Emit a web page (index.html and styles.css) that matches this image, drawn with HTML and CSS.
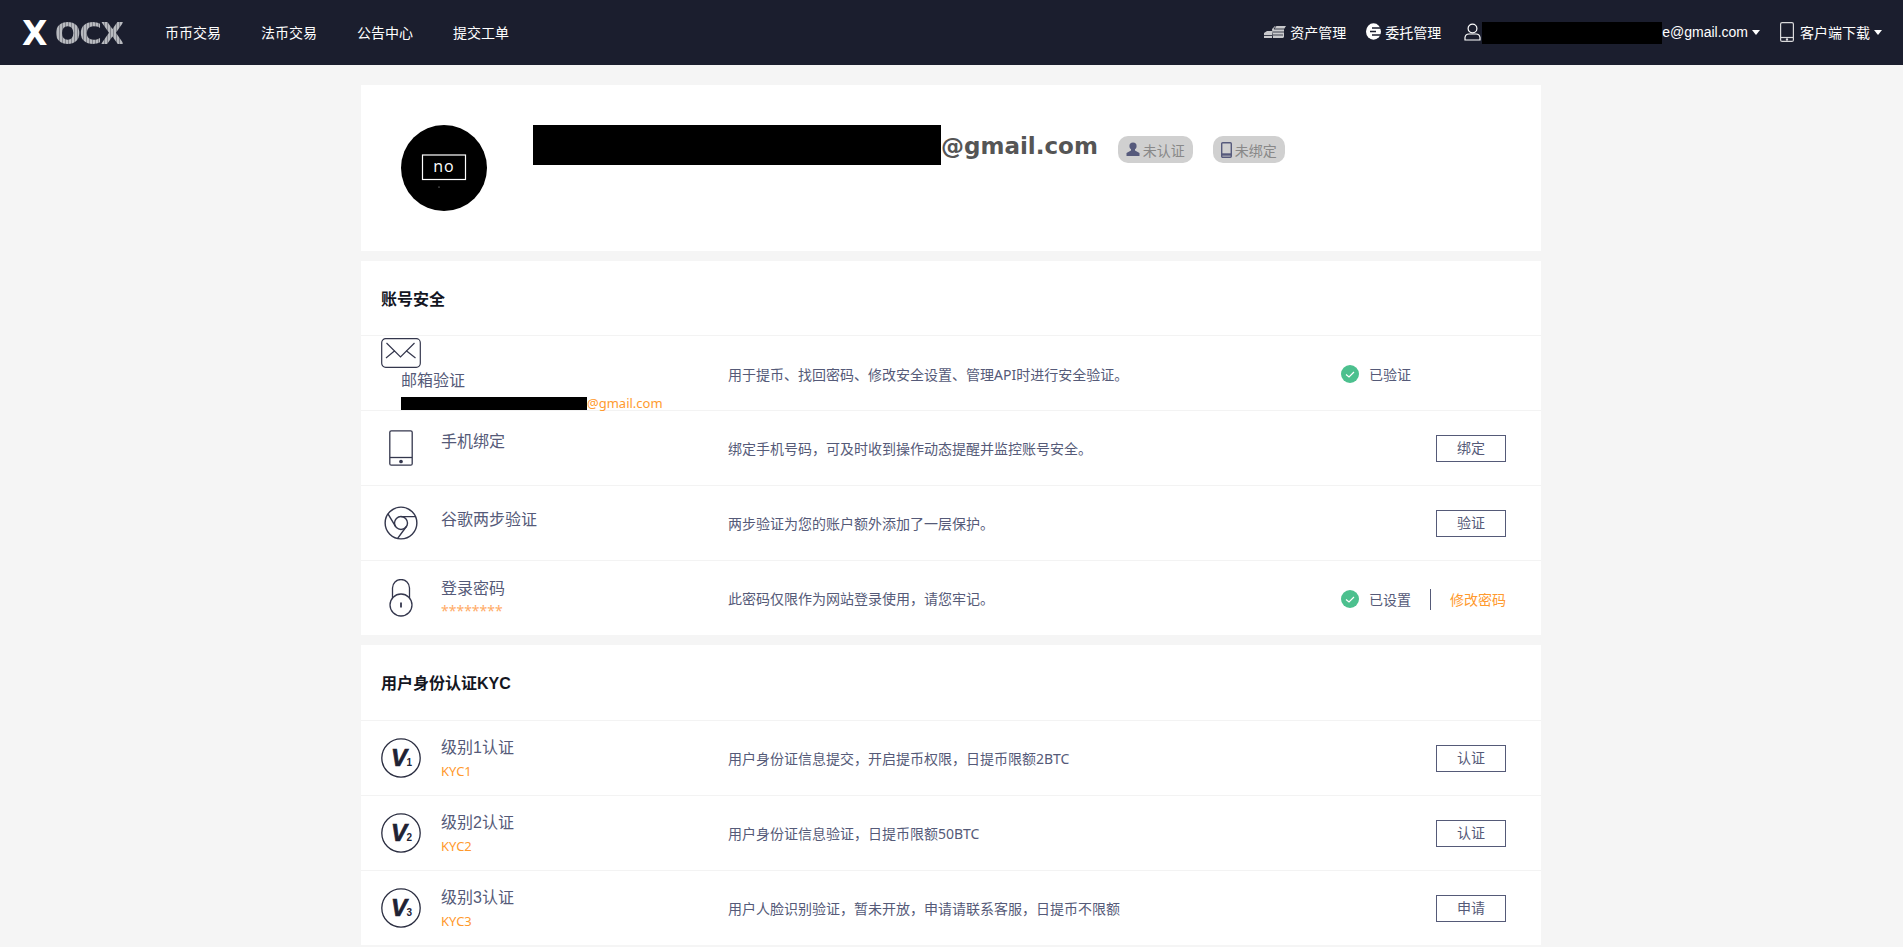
FILE: index.html
```html
<!DOCTYPE html>
<html lang="zh-CN">
<head>
    <meta charset="UTF-8">
    <meta name="viewport" content="width=device-width, initial-scale=1.0">
    <title>OCX 个人中心</title>
    <link rel="stylesheet" href="styles.css">
</head>
<body>
    <header class="topbar">
        <div class="logo"><span class="logo-x">X</span><span class="logo-name">OCX</span></div>
        <nav class="topnav">
            <a>币币交易</a>
            <a>法币交易</a>
            <a>公告中心</a>
            <a>提交工单</a>
        </nav>
        <div class="topbar-right">
            <a class="top-link top-assets">
                <svg width="22" height="14" viewBox="0 0 22 14"><path d="M0 8l3-2h5v7H0zM8 4l3-3h11l-2 3v8l-1 1H9z" fill="#c9c9cc"/><path d="M0 10.500h8M9 7h11M9 10h10M12 1l-2 3h10" fill="none" stroke="#1b1e2e" stroke-width=".8"/></svg>
                资产管理
            </a>
            <a class="top-link top-orders">
                <svg width="15" height="17" viewBox="0 0 15 17"><ellipse cx="7.500" cy="8.500" rx="7.500" ry="8.200" fill="#fff"/><path d="M6 5h9M4 8.500h6M6 12h9" stroke="#1b1e2e" stroke-width="1.400" fill="none"/></svg>
                委托管理
            </a>
            <a class="top-link top-user">
                <svg width="17" height="18" viewBox="0 0 17 18" fill="none" stroke="#fff" stroke-width="1.200"><circle cx="8.500" cy="5.500" r="4.400"/><path d="M1 17v-2.500a4 4 0 0 1 4-3.500h7a4 4 0 0 1 4 3.500V17z"/></svg>
                <span class="top-email"><span class="redact redact-top"></span>e@gmail.com</span><i class="caret"></i>
            </a>
            <a class="top-link top-app">
                <svg width="14" height="20" viewBox="0 0 14 20" fill="none" stroke="#d8d8da" stroke-width="1.200"><rect x="0.600" y="0.600" width="12.800" height="18.800" rx="1.500"/><path d="M1 15.500h12"/><circle cx="7" cy="17.500" r=".6"/></svg>
                <span>客户端下载</span><i class="caret"></i>
            </a>
        </div>
    </header>

    <main class="page">
        <section class="card profile">
            <svg class="avatar" width="86" height="86" viewBox="0 0 86 86">
                <circle cx="43" cy="43" r="43" fill="#000"/>
                <rect x="21.500" y="30" width="43" height="24.500" fill="none" stroke="#fff" stroke-width="1.200"/>
                <text x="43" y="47" text-anchor="middle" class="avatar-text">no</text>
                <circle cx="38" cy="62" r=".6" fill="#bbb"/>
            </svg>
            <div class="profile-name">
                <h1 class="email"><span class="redact redact-email"></span>@gmail.com</h1>
                <span class="badge">
                    <svg width="14" height="15" viewBox="0 0 14 15" fill="#565a7c"><circle cx="7" cy="4" r="3.600"/><path d="M5 7h4v1.500l4.500 2.500V14H.5v-3L5 8.500z"/></svg>未认证
                </span>
                <span class="badge">
                    <svg width="11" height="16" viewBox="0 0 11 16" fill="none" stroke="#565a7c" stroke-width="1.400"><rect x=".7" y=".7" width="9.600" height="14.600" rx="1"/><path d="M1 12.500h9" stroke-width="2.400"/></svg>未绑定
                </span>
            </div>
        </section>

        <section class="card">
            <h2 class="card-title">账号安全</h2>

            <div class="row row-mail">
                <div class="row-left row-left-stacked">
                    <svg class="icon-mail" width="40" height="30" viewBox="0 0 40 30" fill="none" stroke="#34374d" stroke-width="1.200"><rect x=".7" y=".7" width="38.600" height="28.600" rx="4"/><path d="M5.500 5L19.500 19 33.500 5M5 20l9-7.500M25 12.500L34.500 20"/></svg>
                    <div class="row-title">邮箱验证</div>
                    <div class="row-sub"><span class="redact redact-mail"></span>@gmail.com</div>
                </div>
                <div class="row-desc">用于提币、找回密码、修改安全设置、管理API时进行安全验证。</div>
                <div class="row-action">
                    <span class="status"><svg width="18" height="18" viewBox="0 0 18 18"><circle cx="9" cy="9" r="9" fill="#4cc08e"/><path d="M5 9.500l3 2.500 5-5" fill="none" stroke="#fff" stroke-width="1.200"/></svg>已验证</span>
                </div>
            </div>

            <div class="row">
                <div class="row-left">
                    <div class="row-icon">
                        <svg width="24" height="36" viewBox="0 0 24 36" fill="none" stroke="#34374d" stroke-width="1.300"><rect x=".8" y=".8" width="22.400" height="34.400" rx="1.500"/><path d="M1 27.500h22"/><circle cx="12" cy="31.500" r="1.200" fill="#34374d"/></svg>
                    </div>
                    <div class="row-text row-text-single">
                        <div class="row-title">手机绑定</div>
                    </div>
                </div>
                <div class="row-desc">绑定手机号码，可及时收到操作动态提醒并监控账号安全。</div>
                <div class="row-action">
                    <a class="btn">绑定</a>
                </div>
            </div>

            <div class="row">
                <div class="row-left">
                    <div class="row-icon">
                        <svg width="34" height="34" viewBox="0 0 24 24" fill="none" stroke="#34374d" stroke-width="1"><circle cx="12" cy="12" r="11.200"/><circle cx="12" cy="12" r="4.600"/><path d="M22.200 7.500H12M2.800 5.500L8 14.200M9.500 23L15.800 14.500"/></svg>
                    </div>
                    <div class="row-text row-text-low">
                        <div class="row-title">谷歌两步验证</div>
                    </div>
                </div>
                <div class="row-desc">两步验证为您的账户额外添加了一层保护。</div>
                <div class="row-action">
                    <a class="btn">验证</a>
                </div>
            </div>

            <div class="row row-password">
                <div class="row-left">
                    <div class="row-icon">
                        <svg width="24" height="38" viewBox="0 0 24 38" fill="none" stroke="#34374d" stroke-width="1.300"><path d="M3.500 19V9a8.500 8.500 0 0 1 17 0v10"/><circle cx="12" cy="26" r="11"/><path d="M12 23.500v5" stroke-width="1.800"/></svg>
                    </div>
                    <div class="row-text">
                        <div class="row-title">登录密码</div>
                        <div class="row-sub row-stars">********</div>
                    </div>
                </div>
                <div class="row-desc">此密码仅限作为网站登录使用，请您牢记。</div>
                <div class="row-action">
                    <span class="status"><svg width="18" height="18" viewBox="0 0 18 18"><circle cx="9" cy="9" r="9" fill="#4cc08e"/><path d="M5 9.500l3 2.500 5-5" fill="none" stroke="#fff" stroke-width="1.200"/></svg>已设置</span>
                    <span class="divider"></span>
                    <a class="link-orange">修改密码</a>
                </div>
            </div>
        </section>

        <section class="card">
            <h2 class="card-title card-title-kyc">用户身份认证KYC</h2>

            <div class="row">
                <div class="row-left">
                    <div class="row-icon">
                        <svg class="kyc-icon" width="40" height="40" viewBox="0 0 40 40"><circle cx="20" cy="20" r="19.200" fill="none" stroke="#2a2d40" stroke-width="1.300"/><text x="10" y="27.500" class="kyc-v">V</text><text x="25.500" y="28" class="kyc-n">1</text></svg>
                    </div>
                    <div class="row-text row-text-kyc">
                        <div class="row-title">级别1认证</div>
                        <div class="row-sub">KYC1</div>
                    </div>
                </div>
                <div class="row-desc">用户身份证信息提交，开启提币权限，日提币限额2BTC</div>
                <div class="row-action">
                    <a class="btn">认证</a>
                </div>
            </div>

            <div class="row">
                <div class="row-left">
                    <div class="row-icon">
                        <svg class="kyc-icon" width="40" height="40" viewBox="0 0 40 40"><circle cx="20" cy="20" r="19.200" fill="none" stroke="#2a2d40" stroke-width="1.300"/><text x="10" y="27.500" class="kyc-v">V</text><text x="25.500" y="28" class="kyc-n">2</text></svg>
                    </div>
                    <div class="row-text row-text-kyc">
                        <div class="row-title">级别2认证</div>
                        <div class="row-sub">KYC2</div>
                    </div>
                </div>
                <div class="row-desc">用户身份证信息验证，日提币限额50BTC</div>
                <div class="row-action">
                    <a class="btn">认证</a>
                </div>
            </div>

            <div class="row">
                <div class="row-left">
                    <div class="row-icon">
                        <svg class="kyc-icon" width="40" height="40" viewBox="0 0 40 40"><circle cx="20" cy="20" r="19.200" fill="none" stroke="#2a2d40" stroke-width="1.300"/><text x="10" y="27.500" class="kyc-v">V</text><text x="25.500" y="28" class="kyc-n">3</text></svg>
                    </div>
                    <div class="row-text row-text-kyc">
                        <div class="row-title">级别3认证</div>
                        <div class="row-sub">KYC3</div>
                    </div>
                </div>
                <div class="row-desc">用户人脸识别验证，暂未开放，申请请联系客服，日提币不限额</div>
                <div class="row-action">
                    <a class="btn">申请</a>
                </div>
            </div>
        </section>
    </main>
</body>
</html>
```

FILE: styles.css
```css
body {
    margin: 0;
    background-color: #f5f5f5;
    font-family: "Liberation Sans", "Noto Sans CJK SC", sans-serif;
    font-size: 14px;
    color: #555a78;
}

svg {
    display: block;
    flex-shrink: 0;
}

.redact {
    display: inline-block;
    background-color: #000;
}

.redact-top {
    width: 180px;
    height: 22px;
    vertical-align: middle;
}

.redact-email {
    width: 408px;
    height: 40px;
}

.redact-mail {
    width: 186px;
    height: 13px;
    vertical-align: -2px;
}

/* top bar */
.topbar {
    box-sizing: border-box;
    display: flex;
    align-items: center;
    height: 65px;
    padding: 0 21px 2px 22px;
    background-color: #1b1e2e;
    color: #fff;
}

.logo {
    display: flex;
    align-items: center;
    gap: 7px;
    width: 101px;
    margin-top: 3px;
    font-family: "DejaVu Sans", sans-serif;
    font-weight: bold;
    line-height: 1;
}

.logo-x {
    font-size: 33px;
    color: #fff;
}

.logo-name {
    font-size: 31px;
    letter-spacing: -1.500px;
    background: repeating-linear-gradient(90deg, #b8babf 0 2px, #83858d 2px 3px);
    -webkit-background-clip: text;
    background-clip: text;
    color: transparent;
}

.topnav {
    display: flex;
    gap: 40px;
    margin-left: 42px;
}

.topbar-right {
    display: flex;
    align-items: center;
    margin-left: auto;
}

.top-link {
    display: flex;
    align-items: center;
    gap: 4px;
    white-space: nowrap;
}

.top-orders {
    margin-left: 20px;
}

.top-user {
    gap: 1px;
    margin-left: 23px;
}

.top-email {
    padding-top: 2px;
}

.top-app {
    margin-left: 20px;
}

.top-app svg {
    margin-right: 2px;
}

.top-app .caret {
    margin-left: 0;
}

.caret {
    width: 0;
    height: 0;
    margin-left: 3px;
    margin-top: 2px;
    border-left: 4px solid transparent;
    border-right: 4px solid transparent;
    border-top: 5px solid #fff;
}

/* page */
.page {
    width: 1180px;
    margin: 20px 0 0 361px;
}

.card {
    margin-bottom: 10px;
    background-color: #fff;
}

.profile {
    display: flex;
    padding: 40px;
}

.avatar-text {
    fill: #fff;
    font-family: "Open Sans", sans-serif;
    font-size: 16px;
    letter-spacing: 1px;
}

.profile-name {
    display: flex;
    align-items: flex-start;
    margin-left: 46px;
}

.email {
    display: flex;
    margin: 0;
    font-family: "DejaVu Sans", sans-serif;
    font-size: 23px;
    font-weight: bold;
    line-height: 42px;
    color: #555;
}

.badge {
    display: flex;
    align-items: center;
    gap: 3px;
    height: 27px;
    margin: 11px 0 0 20px;
    padding: 0 8px;
    border-radius: 10px;
    background-color: #d0d0d0;
    color: #888;
}

.card-title {
    margin: 0;
    padding-left: 20px;
    font-size: 16px;
    font-weight: bold;
    line-height: 77px;
    height: 74px;
    color: #14161f;
}

.card-title-kyc {
    height: 75px;
}

.row {
    box-sizing: border-box;
    display: flex;
    align-items: center;
    height: 75px;
    padding: 0 35px 0 20px;
    border-top: 1px solid #f3f3f3;
}

.row-mail {
    padding-top: 2px;
}

.row-password .row-action {
    padding-top: 2px;
}

.row-left {
    display: flex;
    align-items: center;
    width: 347px;
    flex-shrink: 0;
}

.row-left-stacked {
    display: block;
    padding-top: 2px;
}

.row-left-stacked .row-title,
.row-left-stacked .row-sub {
    margin-left: 20px;
}

.row-left-stacked .row-title {
    margin-top: 2px;
}

.row-left-stacked .row-sub {
    margin-top: 2px;
    line-height: 18px;
    white-space: nowrap;
}

.row-icon {
    display: flex;
    justify-content: center;
    width: 40px;
    margin-right: 20px;
}

.row-title {
    font-size: 16px;
    line-height: 22px;
}

.row-sub {
    margin-top: 1px;
    font-family: "Noto Sans", "Noto Sans CJK SC", sans-serif;
    font-size: 13px;
    line-height: 22px;
    color: #ff9a2e;
}

.row-stars {
    margin-top: 3px;
    font-size: 14px;
    line-height: 16px;
    color: #ffab66;
}

.row-text-single {
    padding-bottom: 12px;
}

.row-text-low {
    padding-bottom: 7px;
}

.row-text-kyc {
    padding-top: 2px;
}

.row-desc {
    flex: 1;
    font-family: "Noto Sans", "Noto Sans CJK SC", sans-serif;
}

.row-action {
    display: flex;
    align-items: center;
    width: 165px;
}

.status {
    display: flex;
    align-items: center;
    gap: 10px;
}

.divider {
    width: 1px;
    height: 21px;
    margin: 0 19px;
    background-color: #555a78;
}

.link-orange {
    color: #ff9a2e;
}

.btn {
    box-sizing: border-box;
    width: 70px;
    height: 27px;
    margin-left: auto;
    border: 1px solid #555a78;
    line-height: 25px;
    text-align: center;
}

.kyc-v {
    font-family: "Liberation Sans", sans-serif;
    font-size: 24px;
    font-weight: bold;
    font-style: italic;
    fill: #1f2233;
    stroke: #1f2233;
    stroke-width: .7px;
}

.kyc-n {
    font-family: "Liberation Sans", sans-serif;
    font-size: 10px;
    font-weight: bold;
    fill: #1f2233;
}
```
